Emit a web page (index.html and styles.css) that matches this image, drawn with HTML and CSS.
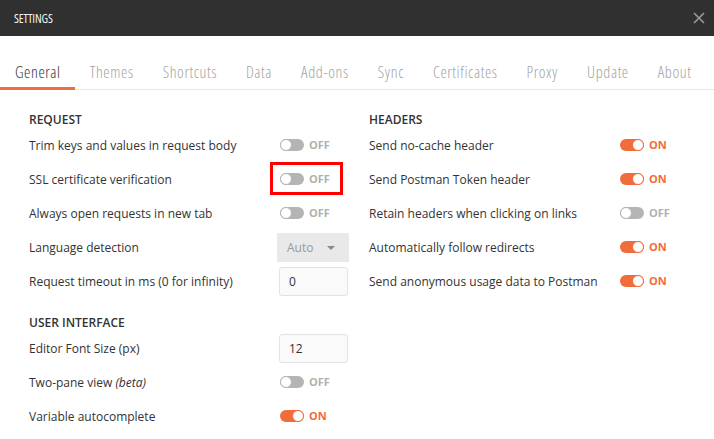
FILE: index.html
```html
<!DOCTYPE html>
<html>
<head>
<meta charset="utf-8">
<link rel="stylesheet" href="styles.css">
</head>
<body>
<div class="modal">
  <div class="titlebar">
    <span class="title">SETTINGS</span>
    <svg class="close" width="12" height="12" viewBox="0 0 12 12"><path d="M1 1L11 11M11 1L1 11" stroke="#9a9a9a" stroke-width="1.6" fill="none"/></svg>
  </div>
  <div class="tabs">
    <div class="tab active">General</div>
    <div class="tab">Themes</div>
    <div class="tab">Shortcuts</div>
    <div class="tab">Data</div>
    <div class="tab">Add-ons</div>
    <div class="tab">Sync</div>
    <div class="tab">Certificates</div>
    <div class="tab">Proxy</div>
    <div class="tab">Update</div>
    <div class="tab">About</div>
  </div>
  <div class="content">
    <div class="col">
      <div class="heading">REQUEST</div>
      <div class="row"><span class="label">Trim keys and values in request body</span><span class="toggle off"><span class="track"></span><span class="state">OFF</span></span></div>
      <div class="row"><span class="label">SSL certificate verification</span><span class="toggle off highlighted"><span class="track"></span><span class="state">OFF</span></span></div>
      <div class="row"><span class="label">Always open requests in new tab</span><span class="toggle off"><span class="track"></span><span class="state">OFF</span></span></div>
      <div class="row"><span class="label">Language detection</span><span class="select">Auto<span class="caret"></span></span></div>
      <div class="row"><span class="label">Request timeout in ms (0 for infinity)</span><span class="input">0</span></div>
      <div class="heading second">USER INTERFACE</div>
      <div class="row"><span class="label">Editor Font Size (px)</span><span class="input">12</span></div>
      <div class="row"><span class="label">Two-pane view <em>(beta)</em></span><span class="toggle off"><span class="track"></span><span class="state">OFF</span></span></div>
      <div class="row"><span class="label">Variable autocomplete</span><span class="toggle on"><span class="track"></span><span class="state">ON</span></span></div>
    </div>
    <div class="col">
      <div class="heading">HEADERS</div>
      <div class="row"><span class="label">Send no-cache header</span><span class="toggle on"><span class="track"></span><span class="state">ON</span></span></div>
      <div class="row"><span class="label">Send Postman Token header</span><span class="toggle on"><span class="track"></span><span class="state">ON</span></span></div>
      <div class="row"><span class="label">Retain headers when clicking on links</span><span class="toggle off"><span class="track"></span><span class="state">OFF</span></span></div>
      <div class="row"><span class="label">Automatically follow redirects</span><span class="toggle on"><span class="track"></span><span class="state">ON</span></span></div>
      <div class="row"><span class="label">Send anonymous usage data to Postman</span><span class="toggle on"><span class="track"></span><span class="state">ON</span></span></div>
    </div>
  </div>
</div>
</body>
</html>
```

FILE: styles.css
```css
html, body {
  margin: 0;
  padding: 0;
  background: #ffffff;
}
body {
  font-family: "Open Sans", "DejaVu Sans", sans-serif;
  color: #333333;
  overflow: hidden;
}
.modal {
  width: 714px;
  height: 439px;
  background: #fff;
}
.titlebar {
  height: 36px;
  background: #303030;
  display: flex;
  align-items: center;
  justify-content: space-between;
  padding: 0 9px 0 14px;
}
.title {
  color: #f2f2f2;
  font-size: 12px;
  font-weight: 400;
  font-stretch: 80%;
  letter-spacing: -0.1px;
}
.close {
  display: block;
  margin-top: -1px;
}
.tabs {
  display: flex;
  margin-top: 26px;
  border-bottom: 1px solid #e6e6e6;
  white-space: nowrap;
}
.tab {
  flex: none;
  padding: 0 14px 5px 15px;
  line-height: 20px;
  font-size: 16px;
  font-weight: 300;
  font-stretch: 80%;
  letter-spacing: 0.6px;
  color: #a3a3a3;
  border-bottom: 3px solid transparent;
  margin-bottom: -1px;
}
.tab.active {
  color: #333;
  border-bottom-color: #f26b3a;
}
.content {
  display: flex;
  gap: 20px;
  padding: 20px 0 0 29px;
}
.col {
  width: 320px;
}
.heading {
  font-size: 12px;
  font-weight: 600;
  line-height: 17px;
  color: #333;
  padding-top: 1px;
}
.heading.second {
  margin-top: 15px;
}
.row {
  height: 34px;
  display: flex;
  align-items: center;
}
.label {
  width: 250px;
  flex: none;
  font-size: 12px;
  color: #333;
}
.label em {
  font-style: italic;
}
.toggle {
  display: flex;
  align-items: center;
  position: relative;
  margin-left: 1px;
}
.track {
  width: 24px;
  height: 12px;
  border-radius: 6px;
  background: #b4b4b4;
  position: relative;
}
.track::after {
  content: "";
  position: absolute;
  top: 0;
  width: 10px;
  height: 10px;
  border-radius: 50%;
  background: #fff;
  border: 1px solid #b4b4b4;
}
.off .track::after {
  left: 0;
}
.on .track {
  background: #f26b3a;
}
.on .track::after {
  right: 0;
  border-color: #f26b3a;
}
.state {
  margin-left: 5px;
  font-size: 11px;
  font-weight: 700;
  line-height: 14px;
}
.off .state {
  color: #b0b0b0;
}
.on .state {
  color: #f26b3a;
}
.highlighted::before {
  content: "";
  position: absolute;
  left: -10px;
  top: -10px;
  width: 67px;
  height: 27px;
  border: 3px solid #ff0000;
}
.select {
  width: 72px;
  height: 29px;
  margin-left: -2px;
  box-sizing: border-box;
  background: #e9e9e9;
  color: #9a9a9a;
  font-size: 12px;
  display: flex;
  align-items: center;
  padding-left: 10px;
  position: relative;
}
.caret {
  position: absolute;
  left: 50px;
  top: 13px;
  border-left: 4px solid transparent;
  border-right: 4px solid transparent;
  border-top: 4px solid #8a8a8a;
}
.input {
  width: 69px;
  height: 29px;
  box-sizing: border-box;
  border: 1px solid #e3e3e3;
  border-radius: 3px;
  background: #fafafa;
  font-size: 12px;
  color: #333;
  display: flex;
  align-items: center;
  padding-left: 9px;
}
```
